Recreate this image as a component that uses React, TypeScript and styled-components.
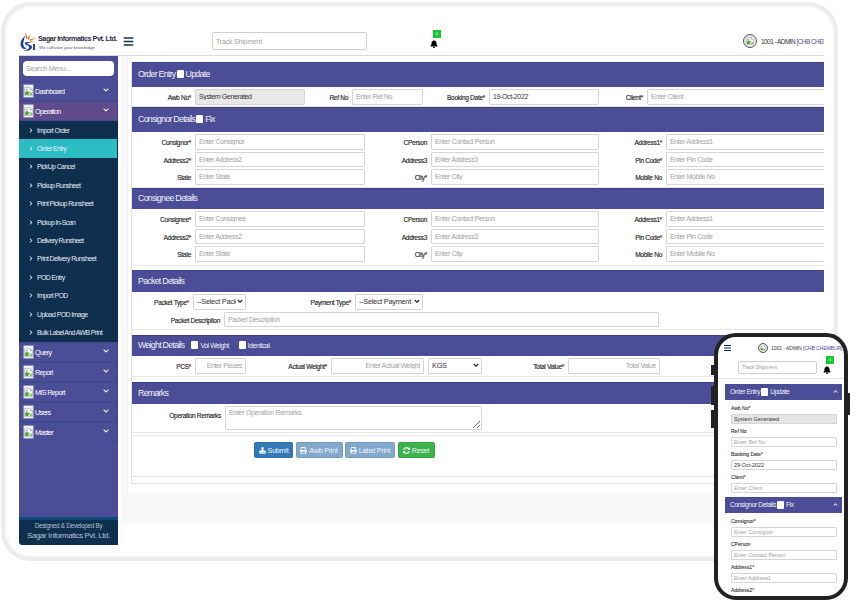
import React from "react";
import styled, { createGlobalStyle } from "styled-components";
import { FaBell, FaPrint, FaSyncAlt, FaChevronDown, FaChevronUp, FaChevronRight, FaBars, FaStamp } from "react-icons/fa";

const GlobalStyle = createGlobalStyle`
  html, body { margin: 0; padding: 0; background: #fff; }
  * { box-sizing: border-box; }
  body { font-family: "Liberation Sans", Arial, sans-serif; }
  input, select, textarea { font-family: inherit; }
  input::placeholder, textarea::placeholder { color: #a2a2a2; opacity: 1; }
`;

const Page = styled.div`
  position: relative;
  width: 850px;
  height: 600px;
  overflow: hidden;
  background: #fff;
  padding: 2px 0 0 1px;
`;
const LaptopFrame = styled.div`
  width: 837px;
  height: 559px;
  border: 4px solid #ececec;
  border-radius: 30px;
  box-shadow: inset 0 0 3px #e4e4e4;
  padding: 21px 10px 12px 14px;
`;
const Screen = styled.div`
  width: 805px;
  height: 518px;
  display: flex;
  flex-direction: column;
  overflow: hidden;
`;
const TopBar = styled.div`
  flex: none;
  height: 29px;
  display: flex;
  align-items: center;
  border-bottom: 1px solid #d9d9d9;
  white-space: nowrap;
`;
const LogoBlock = styled.div`
  width: 99px;
  height: 28px;
  flex: none;
  display: flex;
  align-items: center;
  padding-left: 1px;
`;
const LogoText = styled.div`
  display: flex;
  flex-direction: column;
  margin-top: 1px;
`;
const LogoName = styled.span`
  font-size: 7.2px;
  font-weight: 700;
  letter-spacing: -0.45px;
  color: #2b2b45;
`;
const LogoTag = styled.span`
  font-size: 4.4px;
  color: #555;
  margin-top: 2px;
  margin-left: 1px;
`;
const Burger = styled(FaBars)`
  width: 11px;
  height: 11px;
  color: #14304f;
  margin-left: 5px;
  flex: none;
`;
const TrackInput = styled.input<{ $w: number; $ml: number; $small?: boolean }>`
  width: ${(p) => p.$w}px;
  height: ${(p) => (p.$small ? 13 : 18)}px;
  margin-left: ${(p) => p.$ml}px;
  flex: none;
  border: 1px solid #cfcfcf;
  border-radius: 2px;
  font-size: ${(p) => (p.$small ? 5.4 : 7)}px;
  letter-spacing: -0.2px;
  padding: 0 3px;
  outline: none;
  background: #fff;
`;
const BellWrap = styled.div<{ $ml: number }>`
  position: relative;
  width: 8px;
  height: 10px;
  flex: none;
  margin-left: ${(p) => p.$ml}px;
  margin-top: 8px;
  color: #000;
  font-size: 8px;
  line-height: 0;
`;
const BellBadge = styled.span`
  position: absolute;
  left: 3px;
  top: -10px;
  width: 7.5px;
  height: 7.5px;
  background: #19c832;
  color: #fff;
  font-size: 4px;
  line-height: 7.5px;
  text-align: center;
`;
const UserChip = styled.div<{ $ml: number }>`
  display: flex;
  align-items: center;
  gap: 4px;
  flex: none;
  margin-left: ${(p) => p.$ml}px;
  font-size: 6.4px;
  letter-spacing: -0.5px;
  color: #333;
`;
const Branch = styled.span`
  color: #4b4d97;
`;
const AvatarRing = styled.span<{ $s: number }>`
  width: ${(p) => p.$s}px;
  height: ${(p) => p.$s}px;
  border: 1px solid #555;
  border-radius: 50%;
  background: #e9e9e9;
  display: inline-flex;
  align-items: center;
  justify-content: center;
  flex: none;
`;
const Body = styled.div`
  flex: 1;
  min-height: 0;
  display: flex;
`;
const Sidebar = styled.aside`
  width: 99px;
  flex: none;
  background: #4b4d97;
  display: flex;
  flex-direction: column;
  border-bottom-left-radius: 4px;
  overflow: hidden;
`;
const SearchBox = styled.input`
  width: 91px;
  height: 15px;
  margin: 5px 0 5px 4px;
  border: none;
  border-radius: 4px;
  font-size: 7px;
  letter-spacing: -0.2px;
  padding: 0 3px;
  flex: none;
  background: #fff;
`;
const MenuRow = styled.div<{ $active?: boolean }>`
  height: 20px;
  flex: none;
  display: flex;
  align-items: center;
  padding: 0 8px 0 4px;
  gap: 1px;
  color: #fff;
  font-size: 7.2px;
  letter-spacing: -0.65px;
  background: ${(p) => (p.$active ? "#5f4b8b" : "#4b4d97")};
  border-top: 1px solid #44488f;
  border-bottom: 1px solid #3f4a8f;
  border-right: 1px solid #3a4488;
`;
const MenuLabel = styled.span`
  flex: 1;
`;
const MenuChevron = styled(FaChevronDown)`
  width: 6px;
  height: 6px;
  margin-top: -3px;
`;
const SubMenu = styled.div`
  background: #0f2f4f;
  flex: none;
  height: 221px;
  display: flex;
  flex-direction: column;
`;
const SubItem = styled.div<{ $active?: boolean }>`
  height: 18.4px;
  flex: none;
  display: flex;
  align-items: center;
  gap: 4px;
  padding-left: 10px;
  font-size: 6.9px;
  letter-spacing: -0.58px;
  color: #e6edf3;
  background: ${(p) => (p.$active ? "#2cbcc4" : "transparent")};
  margin-right: ${(p) => (p.$active ? "1px" : "0")};
`;
const SubArrow = styled(FaChevronRight)`
  width: 4px;
  height: 5px;
  flex: none;
`;
const SideFiller = styled.div`
  flex: 1;
`;
const SideFooter = styled.div`
  flex: none;
  height: 28px;
  background: #0f2f4f;
  border-top: 3px solid #0e4a7c;
  color: #b3c0ce;
  text-align: center;
  display: flex;
  flex-direction: column;
  align-items: center;
`;
const FooterSmall = styled.span`
  font-size: 6.4px;
  letter-spacing: -0.3px;
  margin-top: 2px;
`;
const FooterBig = styled.span`
  font-size: 8px;
  letter-spacing: -0.42px;
  margin-top: 2px;
`;
const MainArea = styled.main`
  flex: 1;
  min-width: 0;
  height: 467px;
  margin-left: 3px;
  background: #f8f8f8;
  padding-left: 6px;
`;
const Card = styled.div`
  height: 437px;
  background: #fff;
  padding: 6px 0 0 3px;
  border-left: 1px solid #f2f2f2;
`;
const Panel = styled.div`
  border-left: 1px solid #e2e2e2;
  height: 422px;
  border-bottom: 1px solid #e2e2e2;
`;
const SectionHead = styled.div<{ $h: number; $mt?: number }>`
  height: ${(p) => p.$h}px;
  margin-top: ${(p) => p.$mt || 0}px;
  background: #4b4d97;
  color: #f2f2f8;
  display: flex;
  align-items: center;
  gap: 1px;
  padding: 0 0 2px 6px;
  font-size: 8.8px;
  letter-spacing: -0.72px;
  border-top: 1px solid #3f4188;
`;
const CheckSquare = styled.span<{ $ml?: number }>`
  display: inline-block;
  width: 7px;
  height: 8px;
  background: #fff;
  border-radius: 1px;
  margin-left: ${(p) => p.$ml || 0}px;
  margin-right: 1px;
`;
const SmallCheckLabel = styled.span`
  font-size: 6.8px;
  letter-spacing: -0.4px;
`;
const SectionBody = styled.div<{ $h: number }>`
  height: ${(p) => p.$h}px;
  display: flex;
  flex-direction: column;
  gap: 2px;
  padding-top: 2px;
  border-bottom: 1px solid #e6e6e6;
  overflow: hidden;
`;
const FieldGrid = styled.div<{ $cols: string; $top?: boolean }>`
  display: grid;
  grid-template-columns: ${(p) => p.$cols};
  column-gap: 4px;
  align-items: ${(p) => (p.$top ? "start" : "center")};
`;
const FieldLabel = styled.label<{ $pt?: number }>`
  text-align: right;
  font-size: 6.6px;
  letter-spacing: -0.32px;
  color: #222;
  white-space: nowrap;
  padding-top: ${(p) => p.$pt ?? 2}px;
  -webkit-text-stroke: 0.15px #333;
`;
const Star = styled.span`
  color: #e02020;
`;
const TextField = styled.input<{ $gray?: boolean; $right?: boolean }>`
  width: 100%;
  height: 15.5px;
  border: 1px solid #d6d6d6;
  border-radius: 1px;
  background: ${(p) => (p.$gray ? "#e8e8e8" : "#fff")};
  font-size: 7px;
  letter-spacing: -0.36px;
  color: #333;
  padding: 0 3px;
  outline: none;
  text-align: ${(p) => (p.$right ? "right" : "left")};
`;
const selectArrow =
  "url(\"data:image/svg+xml,%3Csvg xmlns='http://www.w3.org/2000/svg' viewBox='0 0 8 6'%3E%3Cpath d='M1 1l3 3 3-3' fill='none' stroke='%23222' stroke-width='1.6'/%3E%3C/svg%3E\")";
const SelectField = styled.select`
  width: 100%;
  height: 15.5px;
  border: 1px solid #d6d6d6;
  border-radius: 1px;
  appearance: none;
  background: #fff ${selectArrow} no-repeat right 2px center / 6px 5px;
  font-size: 7.4px;
  letter-spacing: -0.3px;
  color: #333;
  padding: 0 9px 0 3px;
  outline: none;
`;
const RemarkField = styled.textarea`
  width: 100%;
  height: 24px;
  border: 1px solid #d6d6d6;
  border-radius: 1px;
  font-size: 7px;
  letter-spacing: -0.3px;
  padding: 2px 3px;
  outline: none;
  display: block;
`;
const ActionRow = styled.div`
  display: flex;
  gap: 2.5px;
  padding: 6px 0 0 122px;
  margin-top: 2px;
  border-top: 1px solid #eeeeee;
  height: 42px;
  border-bottom: 1px solid #e2e2e2;
`;
const ActionButton = styled.button<{ $bg: string; $w: number }>`
  width: ${(p) => p.$w}px;
  height: 16px;
  border: 1px solid rgba(0, 0, 0, 0.08);
  border-radius: 2px;
  background: ${(p) => p.$bg};
  color: #eef3f8;
  font-family: inherit;
  font-size: 7.2px;
  letter-spacing: -0.26px;
  display: flex;
  align-items: center;
  justify-content: center;
  gap: 2px;
  padding: 0;
`;

/* phone overlay */
const Phone = styled.div`
  position: absolute;
  left: 714px;
  top: 333px;
  width: 134px;
  height: 267px;
  background: #fff;
  border: 4px solid #222;
  border-radius: 22px;
  overflow: hidden;
  display: flex;
  flex-direction: column;
`;
const PhoneKey = styled.span<{ $top: number; $h: number; $right?: boolean }>`
  position: absolute;
  left: ${(p) => (p.$right ? 848 : 711)}px;
  top: ${(p) => p.$top}px;
  width: 3px;
  height: ${(p) => p.$h}px;
  background: #222;
`;
const PhoneTop = styled.div`
  flex: none;
  height: 19px;
  display: flex;
  align-items: center;
  padding: 3px 0 0 5px;
  white-space: nowrap;
`;
const PhoneBurger = styled(FaBars)`
  width: 9px;
  height: 8px;
  color: #14304f;
  flex: none;
`;
const PhoneTrack = styled.div`
  flex: none;
  height: 23px;
  display: flex;
  align-items: center;
  border-bottom: 1px solid #e2e2e2;
`;
const PhoneUser = styled(UserChip)`
  font-size: 5.2px;
  letter-spacing: -0.16px;
  gap: 3px;
  color: #444;
`;
const PhoneHead = styled.div<{ $mt?: number }>`
  flex: none;
  height: 15.5px;
  margin: ${(p) => p.$mt || 0}px 0 1.5px 7px;
  width: 117px;
  background: #4b4d97;
  color: #f2f2f8;
  font-size: 6.6px;
  letter-spacing: -0.36px;
  display: flex;
  align-items: center;
  padding: 0 4px 0 5px;
  gap: 1px;
`;
const PhoneHeadChevron = styled(FaChevronUp)`
  width: 5px;
  height: 5px;
  margin-left: auto;
`;
const PhoneField = styled.div`
  flex: none;
  padding: 0 5px 0 13px;
  margin-top: 3.5px;
  display: flex;
  flex-direction: column;
  gap: 3px;
`;
const PhoneLabel = styled.span`
  font-size: 5px;
  color: #333;
  line-height: 6px;
  height: 6px;
  -webkit-text-stroke: 0.1px #333;
`;
const PhoneInput = styled.input<{ $gray?: boolean }>`
  width: 106px;
  height: 10.5px;
  border: 1px solid #d6d6d6;
  border-radius: 1px;
  background: ${(p) => (p.$gray ? "#e6e6e6" : "#fff")};
  font-size: 5.4px;
  color: #333;
  padding: 0 2px;
  outline: none;
`;

const BrokenImage: React.FC<{ size: number }> = ({ size }) => (
  <svg width={size} height={size} viewBox="0 0 16 16">
    <path d="M1 1h10l4 4v10H1z" fill="#fff" stroke="#9a9a9a" />
    <path d="M11 1v4h4" fill="#ddd" stroke="#9a9a9a" />
    <path d="M2 9l3-3 3 3 2-1v2l-3 4H2z" fill="#5aa63c" />
    <path d="M3 3.5h3v2H3z" fill="#5f8fe0" />
    <path d="M9 14l4-5 1 1v4z" fill="#7cc45a" />
  </svg>
);
const MenuIconBox = styled.span`
  width: 11px;
  height: 14px;
  flex: none;
  background: #eef0f6;
  border: 1px solid #8c8fb8;
  border-radius: 1px;
  display: inline-flex;
  align-items: center;
  justify-content: center;
`;
const LogoMark = styled.svg`
  flex: none;
`;

const Logo = () => (
  <LogoMark width="18" height="21" viewBox="0 0 18 21">
    <path d="M5 1 L8 7 L6 8 Z" fill="#e8702a" />
    <path d="M10 3 L9 9 L7.5 8 Z" fill="#e8702a" />
    <path d="M16 7 L10 10 L9.5 8.5 Z" fill="#e8702a" />
    <path d="M15 11 L10 11.5 L10.5 10 Z" fill="#f2a23a" />
    <path d="M5 5 C1 8 -1 13 2 17 C3 18 5 18.5 7 17 C4 17 2 14 4 9 Z" fill="#1f3f9c" />
    <path d="M11 12 C7 10 4 11 5 13 C6 15 10 14 9 17 C8 19 5 19 3 19 C7 21 12 19 12 16 C12 13 7 14 7 12.5 C8 12 10 12 11 12 Z" fill="#1f3f9c" />
    <path d="M13 13h2v6h-2z" fill="#1f3f9c" />
  </LogoMark>
);

const subItems = [
  "Import Order",
  "Order Entry",
  "PickUp Cancel",
  "Pickup Runsheet",
  "Print Pickup Runsheet",
  "Pickup In-Scan",
  "Delivery Runsheet",
  "Print Delivery Runsheet",
  "POD Entry",
  "Import POD",
  "Upload POD Image",
  "Bulk Label And AWB Print",
];

const Req = () => <Star>*</Star>;

const Menu: React.FC<{ label: string; active?: boolean }> = ({ label, active }) => (
  <MenuRow $active={active}>
    <MenuIconBox>
      <BrokenImage size={9} />
    </MenuIconBox>
    <MenuLabel>{label}</MenuLabel>
    <MenuChevron />
  </MenuRow>
);

// last column runs past the panel edge, same as the real page
const partyCols = "59px 170px 58px 168px 59px 175px";

const PartyFields: React.FC<{ first: string; firstHolder: string }> = ({ first, firstHolder }) => (
  <>
    <FieldGrid $cols={partyCols}>
      <FieldLabel>{first}<Req /></FieldLabel>
      <TextField placeholder={firstHolder} />
      <FieldLabel>CPerson</FieldLabel>
      <TextField placeholder="Enter Contact Person" />
      <FieldLabel>Address1<Req /></FieldLabel>
      <TextField placeholder="Enter Address1" />
    </FieldGrid>
    <FieldGrid $cols={partyCols}>
      <FieldLabel>Address2<Req /></FieldLabel>
      <TextField placeholder="Enter Address2" />
      <FieldLabel>Address3</FieldLabel>
      <TextField placeholder="Enter Address3" />
      <FieldLabel>Pin Code<Req /></FieldLabel>
      <TextField placeholder="Enter Pin Code" />
    </FieldGrid>
    <FieldGrid $cols={partyCols}>
      <FieldLabel>State</FieldLabel>
      <TextField placeholder="Enter State" />
      <FieldLabel>City<Req /></FieldLabel>
      <TextField placeholder="Enter City" />
      <FieldLabel>Mobile No</FieldLabel>
      <TextField placeholder="Enter Mobile No" />
    </FieldGrid>
  </>
);

const PhoneRow: React.FC<{ label: string; holder?: string; value?: string; req?: boolean; gray?: boolean }> = ({
  label,
  holder,
  value,
  req,
  gray,
}) => (
  <PhoneField>
    <PhoneLabel>
      {label}
      {req && <Req />}
    </PhoneLabel>
    <PhoneInput $gray={gray} placeholder={holder} defaultValue={value} />
  </PhoneField>
);

export default function App() {
  return (
    <Page>
      <GlobalStyle />
      <LaptopFrame>
        <Screen>
          <TopBar>
            <LogoBlock>
              <Logo />
              <LogoText>
                <LogoName>Sagar Informatics Pvt. Ltd.</LogoName>
                <LogoTag>We cultivate your knowledge</LogoTag>
              </LogoText>
            </LogoBlock>
            <Burger />
            <TrackInput $w={155} $ml={78} placeholder="Track Shipment" />
            <BellWrap $ml={63}>
              <FaBell />
              <BellBadge>0</BellBadge>
            </BellWrap>
            <UserChip $ml={305}>
              <AvatarRing $s={14}>
                <BrokenImage size={8} />
              </AvatarRing>
              <span>
                1001 - ADMIN <Branch>[CHB CHEMBUR]</Branch>
              </span>
            </UserChip>
          </TopBar>
          <Body>
            <Sidebar>
              <SearchBox placeholder="Search Menu..." />
              <Menu label="Dashboard" />
              <Menu label="Operation" active />
              <SubMenu>
                {subItems.map((item) => (
                  <SubItem key={item} $active={item === "Order Entry"}>
                    <SubArrow />
                    {item}
                  </SubItem>
                ))}
              </SubMenu>
              <Menu label="Query" />
              <Menu label="Report" />
              <Menu label="MIS Report" />
              <Menu label="Users" />
              <Menu label="Master" />
              <SideFiller />
              <SideFooter>
                <FooterSmall>Designed &amp; Developed By</FooterSmall>
                <FooterBig>Sagar Informatics Pvt. Ltd.</FooterBig>
              </SideFooter>
            </Sidebar>
            <MainArea>
              <Card>
                <Panel>
                  <SectionHead $h={25}>
                    Order Entry <CheckSquare /> Update
                  </SectionHead>
                  <SectionBody $h={20}>
                    <FieldGrid $cols="59px 110px 39px 71px 58px 110px 40px 195px">
                      <FieldLabel>Awb No<Req /></FieldLabel>
                      <TextField $gray readOnly defaultValue="System Generated" />
                      <FieldLabel>Ref No</FieldLabel>
                      <TextField placeholder="Enter Ref No" />
                      <FieldLabel>Booking Date<Req /></FieldLabel>
                      <TextField defaultValue="19-Oct-2022" />
                      <FieldLabel>Client<Req /></FieldLabel>
                      <TextField placeholder="Enter Client" />
                    </FieldGrid>
                  </SectionBody>
                  <SectionHead $h={25}>
                    Consignor Details <CheckSquare /> Fix
                  </SectionHead>
                  <SectionBody $h={56}>
                    <PartyFields first="Consignor" firstHolder="Enter Consignor" />
                  </SectionBody>
                  <SectionHead $h={21}>Consignee Details</SectionHead>
                  <SectionBody $h={57}>
                    <PartyFields first="Consignee" firstHolder="Enter Consignee" />
                  </SectionBody>
                  <SectionHead $h={22} $mt={4}>Packet Details</SectionHead>
                  <SectionBody $h={38}>
                    <FieldGrid $cols="57px 53px 101px 68px">
                      <FieldLabel>Packet Type<Req /></FieldLabel>
                      <SelectField>
                        <option>--Select Packet Type</option>
                      </SelectField>
                      <FieldLabel>Payment Type<Req /></FieldLabel>
                      <SelectField>
                        <option>--Select Payment Type</option>
                      </SelectField>
                    </FieldGrid>
                    <FieldGrid $cols="88px 435px">
                      <FieldLabel>Packet Description</FieldLabel>
                      <TextField placeholder="Packet Description" />
                    </FieldGrid>
                  </SectionBody>
                  <SectionHead $h={21} $mt={5}>
                    Weight Details <CheckSquare $ml={6} />
                    <SmallCheckLabel>Vol Weight</SmallCheckLabel>
                    <CheckSquare $ml={9} />
                    <SmallCheckLabel>Identical</SmallCheckLabel>
                  </SectionHead>
                  <SectionBody $h={21}>
                    <FieldGrid $cols="59px 51px 77px 93px 54px 78px 92px">
                      <FieldLabel>PCS<Req /></FieldLabel>
                      <TextField $right placeholder="Enter Pieces" />
                      <FieldLabel>Actual Weight<Req /></FieldLabel>
                      <TextField $right placeholder="Enter Actual Weight" />
                      <SelectField>
                        <option>KGS</option>
                      </SelectField>
                      <FieldLabel>Total Value<Req /></FieldLabel>
                      <TextField $right placeholder="Total Value" />
                    </FieldGrid>
                  </SectionBody>
                  <SectionHead $h={22} $mt={5}>Remarks</SectionHead>
                  <SectionBody $h={29}>
                    <FieldGrid $cols="89px 257px" $top>
                      <FieldLabel $pt={6}>Operation Remarks</FieldLabel>
                      <RemarkField placeholder="Enter Operation Remarks" />
                    </FieldGrid>
                  </SectionBody>
                  <ActionRow>
                    <ActionButton $bg="#337ab7" $w={39}>
                      <FaStamp size={7} /> Submit
                    </ActionButton>
                    <ActionButton $bg="#82a8cc" $w={47}>
                      <FaPrint size={7} /> Awb Print
                    </ActionButton>
                    <ActionButton $bg="#82a8cc" $w={50}>
                      <FaPrint size={7} /> Label Print
                    </ActionButton>
                    <ActionButton $bg="#3db14a" $w={37}>
                      <FaSyncAlt size={7} /> Reset
                    </ActionButton>
                  </ActionRow>
                </Panel>
              </Card>
            </MainArea>
          </Body>
        </Screen>
      </LaptopFrame>

      <PhoneKey $top={365} $h={10} />
      <PhoneKey $top={386} $h={19} />
      <PhoneKey $top={410} $h={18} />
      <PhoneKey $top={393} $h={22} $right />
      <Phone>
        <PhoneTop>
          <PhoneBurger />
          <PhoneUser $ml={26}>
            <AvatarRing $s={10}>
              <BrokenImage size={6} />
            </AvatarRing>
            <span>
              1001 - ADMIN <Branch>[CHB CHEMBUR]</Branch>
            </span>
          </PhoneUser>
        </PhoneTop>
        <PhoneTrack>
          <TrackInput $small $w={79} $ml={20} placeholder="Track Shipment" />
          <BellWrap $ml={6}>
            <FaBell />
            <BellBadge>0</BellBadge>
          </BellWrap>
        </PhoneTrack>
        <PhoneHead $mt={5}>
          Order Entry <CheckSquare /> Update
          <PhoneHeadChevron />
        </PhoneHead>
        <PhoneRow label="Awb No" req gray value="System Generated" />
        <PhoneRow label="Ref No" holder="Enter Ref No" />
        <PhoneRow label="Booking Date" req value="29-Oct-2022" />
        <PhoneRow label="Client" req holder="Enter Client" />
        <PhoneHead $mt={4}>
          Consignor Details <CheckSquare /> Fix
          <PhoneHeadChevron />
        </PhoneHead>
        <PhoneRow label="Consignor" req holder="Enter Consignor" />
        <PhoneRow label="CPerson" holder="Enter Contact Person" />
        <PhoneRow label="Address1" req holder="Enter Address1" />
        <PhoneRow label="Address2" req holder="Enter Address2" />
      </Phone>
    </Page>
  );
}
